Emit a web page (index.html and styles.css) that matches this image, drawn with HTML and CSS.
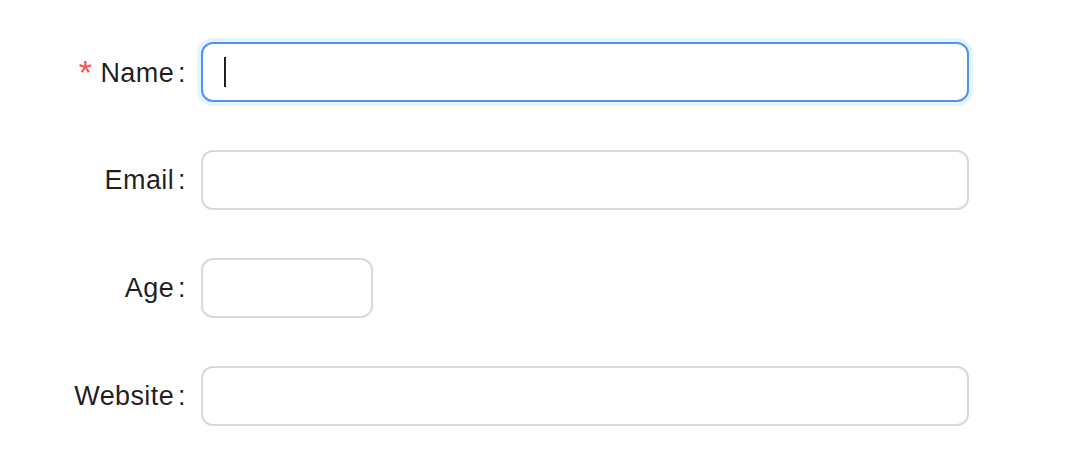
FILE: index.html
```html
<!DOCTYPE html>
<html>
<head>
<meta charset="utf-8">
<link rel="stylesheet" href="styles.css">
</head>
<body>
<form class="form">
  <div class="row">
    <label class="label"><span class="req">*</span>Name<span class="colon">:</span></label>
    <div class="input focused"><span class="caret"></span></div>
  </div>
  <div class="row">
    <label class="label">Email<span class="colon">:</span></label>
    <div class="input"></div>
  </div>
  <div class="row">
    <label class="label">Age<span class="colon">:</span></label>
    <div class="input small"></div>
  </div>
  <div class="row">
    <label class="label">Website<span class="colon">:</span></label>
    <div class="input"></div>
  </div>
</form>
</body>
</html>
```
FILE: styles.css
```css
html, body {
  margin: 0;
  padding: 0;
  background: #ffffff;
}
body {
  font-family: "Liberation Sans", Arial, sans-serif;
  color: rgba(0, 0, 0, 0.88);
}
.form {
  padding-top: 42px;
  width: 969px;
  display: flex;
  flex-direction: column;
  gap: 48px;
}
.row {
  display: flex;
  align-items: center;
  height: 60px;
}
.label {
  width: 201px;
  flex: none;
  box-sizing: border-box;
  padding-right: 15px;
  text-align: right;
  font-size: 27px;
  letter-spacing: 0.4px;
  line-height: 57px;
  white-space: nowrap;
}
.req {
  color: #ff4d4f;
  margin-right: 8px;
  font-size: 34px;
  position: relative;
  top: 2px;
}
.colon {
  margin-left: 4px;
}
.input {
  flex: 1;
  height: 60px;
  box-sizing: border-box;
  border: 2px solid #d9d9d9;
  border-radius: 12px;
  background: #ffffff;
  display: flex;
  align-items: center;
  padding-left: 21px;
}
.input.small {
  flex: none;
  width: 172px;
}
.input.focused {
  border-color: #4d94f5;
  box-shadow: 0 0 0 4px rgba(5, 145, 255, 0.1);
}
.caret {
  width: 2px;
  height: 30px;
  background: #1f1f1f;
}
```
